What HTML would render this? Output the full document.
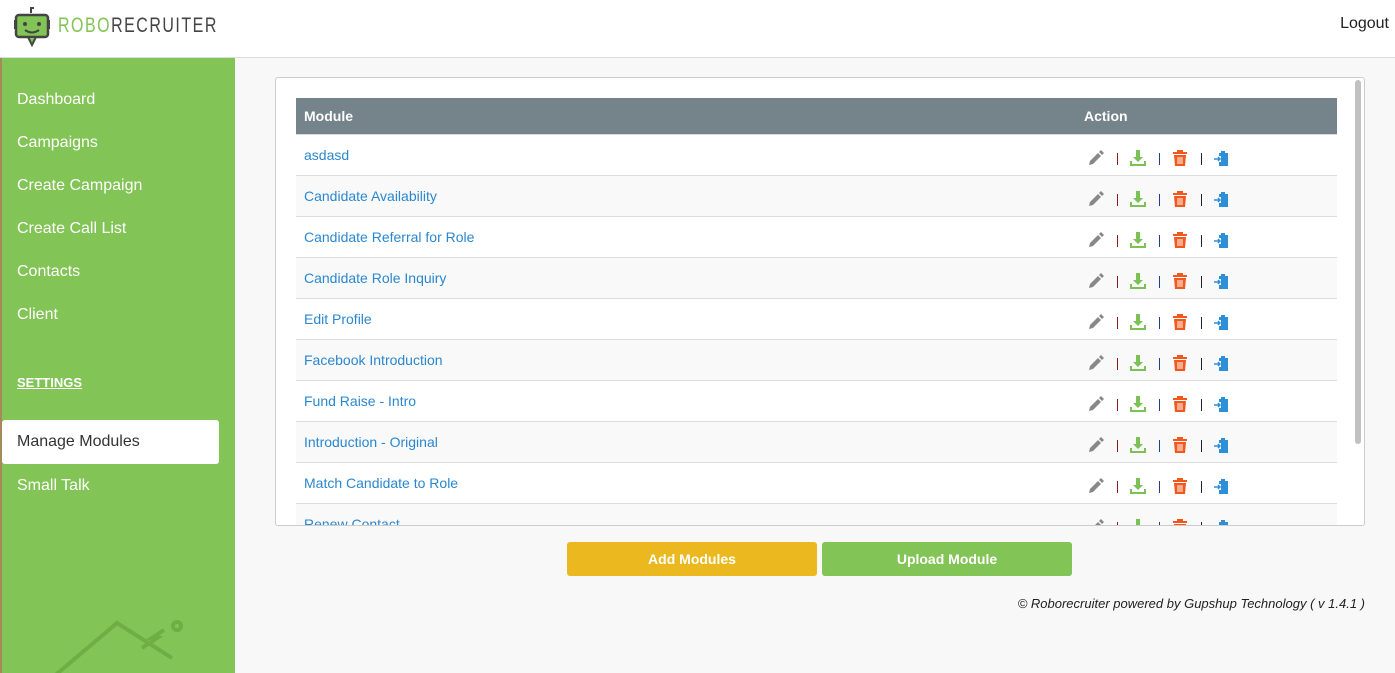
<!DOCTYPE html>
<html><head><style>
*{margin:0;padding:0;box-sizing:border-box}
body{width:1395px;height:673px;overflow:hidden;background:#f8f8f8;font-family:"Liberation Sans",sans-serif;position:relative}
.hdr{position:absolute;left:0;top:0;width:1395px;height:58px;background:#fff;border-bottom:1px solid #ddd}
.logo{position:absolute;left:58px;top:14px;font-size:21px;letter-spacing:2px;white-space:nowrap;transform:scaleX(0.76);transform-origin:left}
.logout{position:absolute;right:6px;top:15px;font-size:16px;color:#222}
.side{position:absolute;left:0;top:58px;width:235px;height:615px;background:#82c455;border-left:2px solid #a58a5a;overflow:hidden}
.side a{position:absolute;left:15px;color:#fff;font-size:16px;text-decoration:none}
.mm{position:absolute;left:0;top:362px;width:217px;height:44px;background:#fff;border-radius:3px;color:#333;font-size:16px;padding:13px 0 0 15px}
.panel{position:absolute;left:275px;top:77px;width:1090px;height:449px;background:#fff;border:1px solid #ccc;border-radius:3px;overflow:hidden}
table{position:absolute;left:20px;top:20px;width:1041px;border-collapse:collapse;font-size:14px}
th{background:#75838b;color:#fff;text-align:left;height:36px;padding-left:8px;font-size:14px}
td{height:41px;border-top:1px solid #ddd;padding-left:8px;color:#2a87d0;vertical-align:top;padding-top:12px}
tr:nth-child(odd) td{background:#f9f9f9}
td.act{padding-left:12px;white-space:nowrap;padding-top:13px}
.sep{display:inline-block;width:1px;height:12px;margin:0 12px 0 13px;vertical-align:-4px}
.ic{display:inline-block;vertical-align:-6px}
.scroll{position:absolute;right:3px;top:2px;width:6px;height:364px;background:#c1c1c1;border-radius:3px}
.btn{position:absolute;top:542px;width:250px;height:34px;color:#fff;font-size:14px;font-weight:bold;text-align:center;line-height:34px;border-radius:3px}
.foot{position:absolute;right:30px;top:596px;font-size:13px;font-style:italic;color:#222}
</style></head><body>
<div class="hdr">
<svg style="position:absolute;left:14px;top:5px" width="36" height="42" viewBox="0 0 36 42"><path d="M17 8v-5h3" stroke="#444" stroke-width="2" fill="none"/><rect x="2" y="10" width="32" height="22" rx="3" fill="#82c455" stroke="#444" stroke-width="2.5"/><rect x="0" y="15" width="3" height="9" fill="#444"/><rect x="33" y="15" width="3" height="9" fill="#444"/><circle cx="11" cy="19" r="2" fill="#444"/><circle cx="25" cy="19" r="2" fill="#444"/><path d="M11 25q7 5 14 0" stroke="#444" stroke-width="2" fill="none"/><path d="M14 32l4 8 4-8z" fill="#82c455" stroke="#444" stroke-width="2"/></svg>
<div class="logo"><span style="color:#82c455">ROBO</span><span style="color:#444">RECRUITER</span></div>
<div class="logout">Logout</div>
</div>
<div class="side">
<a style="top:33px">Dashboard</a><a style="top:76px">Campaigns</a><a style="top:119px">Create Campaign</a><a style="top:162px">Create Call List</a><a style="top:205px">Contacts</a><a style="top:248px">Client</a>
<a style="top:317px;font-size:13px;font-weight:bold;text-decoration:underline">SETTINGS</a>
<div class="mm">Manage Modules</div>
<a style="top:419px">Small Talk</a>
<svg style="position:absolute;left:40px;top:560px" width="160" height="60" viewBox="0 0 160 60"><g stroke="#6fae44" stroke-width="4" fill="none"><path d="M10 60L75 5L130 40"/><path d="M100 30l15-10-5 0 12-8"/><circle cx="135" cy="8" r="4"/></g></svg>
</div>
<div class="panel">
<table></table>
<div class="scroll"></div>
</div>
<div class="btn" style="left:567px;background:#ebb91f">Add Modules</div>
<div class="btn" style="left:822px;background:#82c455">Upload Module</div>
<div class="foot">© Roborecruiter powered by Gupshup Technology ( v 1.4.1 )</div>
<script>
var n=["asdasd","Candidate Availability","Candidate Referral for Role","Candidate Role Inquiry","Edit Profile","Facebook Introduction","Fund Raise - Intro","Introduction - Original","Match Candidate to Role","Renew Contact"];
var a='<svg class="ic" width="16" height="18" viewBox="0 0 16 18"><path d="M1 16l1-4 8-8 3 3-8 8z M11 3l2-2 3 3-2 2z" fill="#888"/></svg><span class="sep" style="background:#8b1a1a"></span><svg class="ic" width="16" height="18" viewBox="0 0 16 18"><path d="M6 1h4v7h3l-5 5-5-5h3z M0 12h2v3h12v-3h2v5H0z" fill="#7cc155"/></svg><span class="sep" style="background:#1f3f8f"></span><svg class="ic" width="16" height="18" viewBox="0 0 16 18"><path d="M5 1h6v2h4v2H1V3h4z M2 6h12l-1 11H3z" fill="#f2581e"/><path d="M6 8v7M8 8v7M10 8v7" stroke="#fff"/></svg><span class="sep" style="background:#222"></span><svg class="ic" width="16" height="18" viewBox="0 0 16 18"><path d="M7 2h4v2h3v13H5v-4h2v-6H5V4h2z" fill="#2d8fd8"/><path d="M0 10h6M4 8l2 2-2 2" stroke="#2d8fd8" stroke-width="1.5" fill="none"/></svg>';
var h="";n.forEach(function(x){h+='<tr><td>'+x+'</td><td class="act">'+a+'</td></tr>'});
document.querySelector("table").innerHTML='<tr><th style="width:780px">Module</th><th>Action</th></tr>'+h;
</script>
</body></html>
